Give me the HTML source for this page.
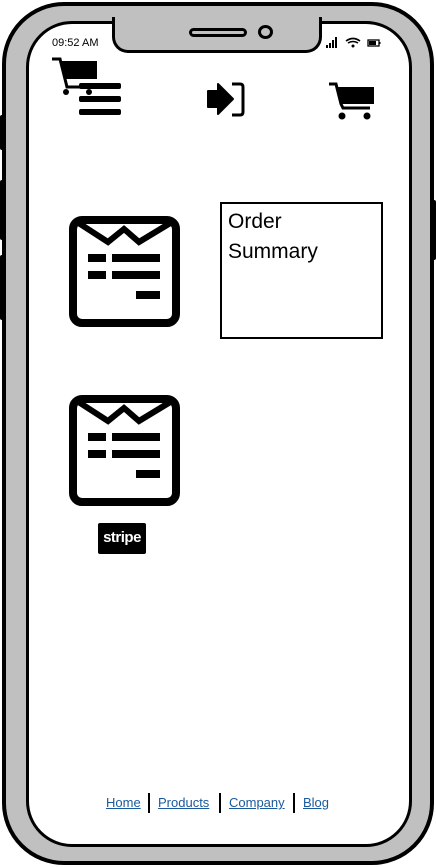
<!DOCTYPE html>
<html><head><meta charset="utf-8"><style>
*{margin:0;padding:0;box-sizing:border-box}
body{width:436px;height:867px;background:#fff;position:relative;overflow:hidden;font-family:"Liberation Sans",sans-serif}
.abs{position:absolute}
.outer{left:2px;top:2px;width:432px;height:863px;border:4px solid #000;border-radius:62px;background:#c0c0c0}
.screen{left:26px;top:21px;width:386px;height:826px;border:3px solid #000;border-radius:46px;background:#fff}
.notch{left:112px;top:17px;width:210px;height:36px;background:#c0c0c0;border:3px solid #000;border-top:none;border-radius:0 0 16px 16px}
.btn{background:#000;width:4px;border-radius:2px}
.links{top:795px;left:0;width:436px;font-size:13px;color:#1a5a9c}
.links a{position:absolute;color:#1a5a9c;text-decoration:underline}
.sep{position:absolute;top:793px;width:2px;height:20px;background:#000}
</style></head><body>
<div class="abs btn" style="left:0;top:115px;height:35px"></div>
<div class="abs btn" style="left:0;top:180px;height:60px"></div>
<div class="abs btn" style="left:0;top:255px;height:65px"></div>
<div class="abs btn" style="left:432px;top:200px;height:60px"></div>
<div class="abs outer"></div>
<div class="abs screen"></div>
<div class="abs notch"></div>
<div class="abs" style="left:189px;top:28px;width:58px;height:9px;border:3px solid #000;border-radius:5px;background:#c0c0c0"></div>
<div class="abs" style="left:258px;top:25px;width:15px;height:14px;border:3px solid #000;border-radius:50%;background:#c0c0c0"></div>
<div class="abs" style="left:52px;top:37px;font-size:11px">09:52 AM</div>
<svg class="abs" style="left:326px;top:37px" width="60" height="12">
<rect x="0" y="8" width="2" height="3"/><rect x="3" y="6" width="2" height="5"/><rect x="6" y="3" width="2" height="8"/><rect x="9" y="0" width="2" height="11"/>
<path d="M20 4 Q27 -1 34 4 M22 6 Q27 3 32 6" stroke="#000" stroke-width="1.6" fill="none"/><circle cx="27" cy="9" r="1.5"/>
<rect x="42" y="3" width="11" height="6" fill="none" stroke="#000" stroke-width="1.3"/><rect x="43" y="4" width="7" height="4"/><rect x="53" y="5" width="1.5" height="2"/>
</svg>
<!-- cart+menu -->
<svg class="abs" style="left:51px;top:57px" width="72" height="62">
<path d="M1 2 H9 L16 30 H45" stroke="#000" stroke-width="3" fill="none"/>
<path d="M10 4 H46 V22 H14 Z"/>
<circle cx="15" cy="35" r="3"/><circle cx="38" cy="35" r="3"/>
<rect x="28" y="26" width="42" height="6" rx="2"/><rect x="28" y="39" width="42" height="6" rx="2"/><rect x="28" y="52" width="42" height="6" rx="2"/>
</svg>
<!-- login -->
<svg class="abs" style="left:207px;top:82px" width="44" height="36">
<path d="M1 9 H11 V2 L26 17 L11 32 V25 H1 Z" stroke="#000" stroke-width="2" stroke-linejoin="round"/>
<path d="M25 2 H33 Q36 2 36 5 V30 Q36 33 33 33 H25" stroke="#000" stroke-width="3" fill="none"/>
</svg>
<!-- cart -->
<svg class="abs" style="left:328px;top:82px" width="48" height="40">
<path d="M1 2 H8 L13 22 L15 26 H42" stroke="#000" stroke-width="3" fill="none"/>
<path d="M10 5 H46 V22 H14 Z"/>
<circle cx="14" cy="34" r="3.5"/><circle cx="39" cy="34" r="3.5"/>
</svg>
<!-- invoices -->
<svg class="abs" style="left:68px;top:215px" width="113" height="113">
<rect x="5" y="5" width="103" height="103" rx="9" fill="none" stroke="#000" stroke-width="8"/>
<path d="M9 7 L40 27 L56 14 L71 27 L104 7" stroke="#000" stroke-width="6" fill="none" stroke-linejoin="miter"/>
<rect x="20" y="39" width="18" height="8"/><rect x="44" y="39" width="48" height="8"/>
<rect x="20" y="56" width="18" height="8"/><rect x="44" y="56" width="48" height="8"/>
<rect x="68" y="76" width="24" height="8"/>
</svg>
<svg class="abs" style="left:68px;top:394px" width="113" height="113">
<rect x="5" y="5" width="103" height="103" rx="9" fill="none" stroke="#000" stroke-width="8"/>
<path d="M9 7 L40 27 L56 14 L71 27 L104 7" stroke="#000" stroke-width="6" fill="none" stroke-linejoin="miter"/>
<rect x="20" y="39" width="18" height="8"/><rect x="44" y="39" width="48" height="8"/>
<rect x="20" y="56" width="18" height="8"/><rect x="44" y="56" width="48" height="8"/>
<rect x="68" y="76" width="24" height="8"/>
</svg>
<div class="abs" style="left:98px;top:523px;width:48px;height:31px;background:#000;border-radius:2px;color:#fff;font-weight:bold;font-size:15px;text-align:center;line-height:30px;letter-spacing:-0.5px">stripe</div>
<div class="abs" style="left:220px;top:202px;width:163px;height:137px;border:2px solid #000;padding:3px 6px;font-size:21px;line-height:30px">Order<br>Summary</div>
<div class="abs links">
<a style="left:106px">Home</a><a style="left:158px">Products</a><a style="left:229px">Company</a><a style="left:303px">Blog</a>
</div>
<div class="sep" style="left:148px"></div><div class="sep" style="left:219px"></div><div class="sep" style="left:293px"></div>
</body></html>
